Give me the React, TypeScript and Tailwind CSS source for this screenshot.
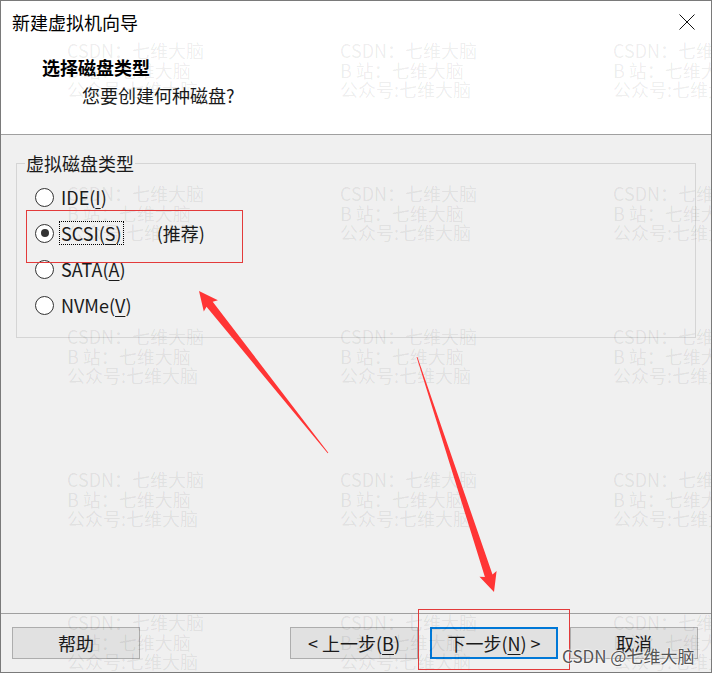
import React from 'react';

type Pt = [number, number];

const WATERMARK = ['CSDN：七维大脑', 'B 站：七维大脑', '公众号:七维大脑'];

// tapered snipping-tool arrow: thin tail, thick shaft near the head
const arrowPoints = (tail: Pt, tip: Pt, headLen = 17, headHalf = 9, shaftHalf = 4) => {
  const dx = tip[0] - tail[0];
  const dy = tip[1] - tail[1];
  const len = Math.hypot(dx, dy);
  const ux = dx / len;
  const uy = dy / len;
  const nx = -uy;
  const ny = ux;
  const bx = tip[0] - ux * headLen;
  const by = tip[1] - uy * headLen;
  const wx = tip[0] - ux * (headLen + 2);
  const wy = tip[1] - uy * (headLen + 2);
  const pts: Pt[] = [
    [tail[0] + nx * 0.4, tail[1] + ny * 0.4],
    [bx + nx * shaftHalf, by + ny * shaftHalf],
    [wx + nx * headHalf, wy + ny * headHalf],
    tip,
    [wx - nx * headHalf, wy - ny * headHalf],
    [bx - nx * shaftHalf, by - ny * shaftHalf],
    [tail[0] - nx * 0.4, tail[1] - ny * 0.4],
  ];
  return pts.map((p) => `${p[0].toFixed(1)},${p[1].toFixed(1)}`).join(' ');
};

interface RadioProps {
  pre: string;
  mn: string;
  post: string;
  checked?: boolean;
  focused?: boolean;
  extra?: string;
}

const Radio = ({ pre, mn, post, checked, focused, extra }: RadioProps) => (
  <div className="h-[36px] flex items-center">
    <span className="w-[19px] h-[19px] rounded-full border border-[#333333] bg-white flex items-center justify-center shrink-0">
      {checked && <span className="w-[8px] h-[8px] rounded-full bg-[#333333]" />}
    </span>
    <span
      className={
        'ml-[5px] px-[1px] leading-[22px] text-[18px] text-[#1a1a1a] border ' +
        (focused ? 'border-dotted border-black' : 'border-transparent')
      }
    >
      {pre}
      <span className="underline underline-offset-[3px]">{mn}</span>
      {post}
    </span>
    {extra && <span className="ml-[33px] text-[18px] leading-[22px] text-[#1a1a1a]">{extra}</span>}
  </div>
);

const Button = ({ children, focused }: { children: React.ReactNode; focused?: boolean }) => (
  <button
    className={
      'w-[128px] h-[32px] flex items-center justify-center text-[18px] leading-none text-[#1a1a1a] bg-[#e1e1e1] ' +
      (focused ? 'border-2 border-[#0078d7]' : 'border border-[#adadad]')
    }
  >
    {children}
  </button>
);

export default function App() {
  return (
    <div className="relative w-[712px] h-[673px] overflow-hidden border border-[#7a7a7a] bg-[#f0f0f0] flex flex-col font-['Noto_Sans_CJK_SC',sans-serif]">
      {/* Header */}
      <div className="h-[134px] shrink-0 bg-white border-b border-[#a0a0a0]">
        <div className="h-[42px] flex items-center justify-between pl-[11px] pr-[16px]">
          <span className="text-[18px] leading-none text-black">新建虚拟机向导</span>
          <svg width="16" height="16" viewBox="0 0 16 16">
            <path d="M0.5 0.5 L15.5 15.5 M15.5 0.5 L0.5 15.5" stroke="#111" strokeWidth="1" />
          </svg>
        </div>
        <div className="mt-[12px] pl-[41px] text-[18px] leading-[24px] font-bold text-black">选择磁盘类型</div>
        <div className="mt-[4px] pl-[81px] text-[18px] leading-[24px] text-[#1a1a1a]">您要创建何种磁盘?</div>
      </div>

      {/* Body */}
      <div className="flex-1 pt-[16px] pl-[15px] pr-[15px]">
        <fieldset className="w-[680px] border border-[#d5d5d5] pb-[14px]">
          <legend className="ml-[8px] px-[1px] text-[18px] leading-[24px] text-[#1a1a1a]">虚拟磁盘类型</legend>
          <div className="flex flex-col pt-[4px] pl-[18px]">
            <Radio pre="IDE(" mn="I" post=")" />
            <Radio pre="SCSI(" mn="S" post=")" checked focused extra="(推荐)" />
            <Radio pre="SATA(" mn="A" post=")" />
            <Radio pre="NVMe(" mn="V" post=")" />
          </div>
        </fieldset>
      </div>

      {/* Footer */}
      <div className="h-[59px] shrink-0 border-t border-[#a0a0a0] pt-[13px] pl-[11px] pr-[13px] flex items-start">
        <Button>帮助</Button>
        <div className="ml-auto flex gap-[12px]">
          <Button>
            &lt;&nbsp;上一步(<span className="underline underline-offset-[3px]">B</span>)
          </Button>
          <Button focused>
            下一步(<span className="underline underline-offset-[3px]">N</span>)&nbsp;&gt;
          </Button>
          <Button>取消</Button>
        </div>
      </div>

      {/* Watermark overlay */}
      <div className="absolute inset-0 pointer-events-none">
        {[0, 1, 2, 3, 4].map((r) =>
          [0, 1, 2].map((c) => (
            <div
              key={`${r}-${c}`}
              className="absolute flex flex-col text-[18px] leading-[19.5px] text-black/[0.075] whitespace-nowrap"
              style={{ left: 66 + c * 273, top: 40 + r * 143 }}
            >
              {WATERMARK.map((t) => (
                <span key={t}>{t}</span>
              ))}
            </div>
          ))
        )}
      </div>

      {/* Annotations */}
      <div className="absolute left-[25px] top-[209px] w-[217px] h-[53px] border border-[#e33b3b] pointer-events-none" />
      <div className="absolute left-[417px] top-[608px] w-[152px] h-[61px] border border-[#e33b3b] pointer-events-none" />
      <svg className="absolute left-0 top-0 pointer-events-none" width="712" height="673" viewBox="-1 -1 712 673">
        <polygon points={arrowPoints([326, 451], [197, 289])} fill="#ff3535" />
        <polygon points={arrowPoints([415, 355], [492, 590])} fill="#ff3535" />
      </svg>
      <span className="absolute left-[561px] top-[644px] text-[17px] leading-[22px] text-[#555555] [text-shadow:0_0_2px_#fff,0_0_2px_#fff] pointer-events-none">
        CSDN @七维大脑
      </span>
    </div>
  );
}
